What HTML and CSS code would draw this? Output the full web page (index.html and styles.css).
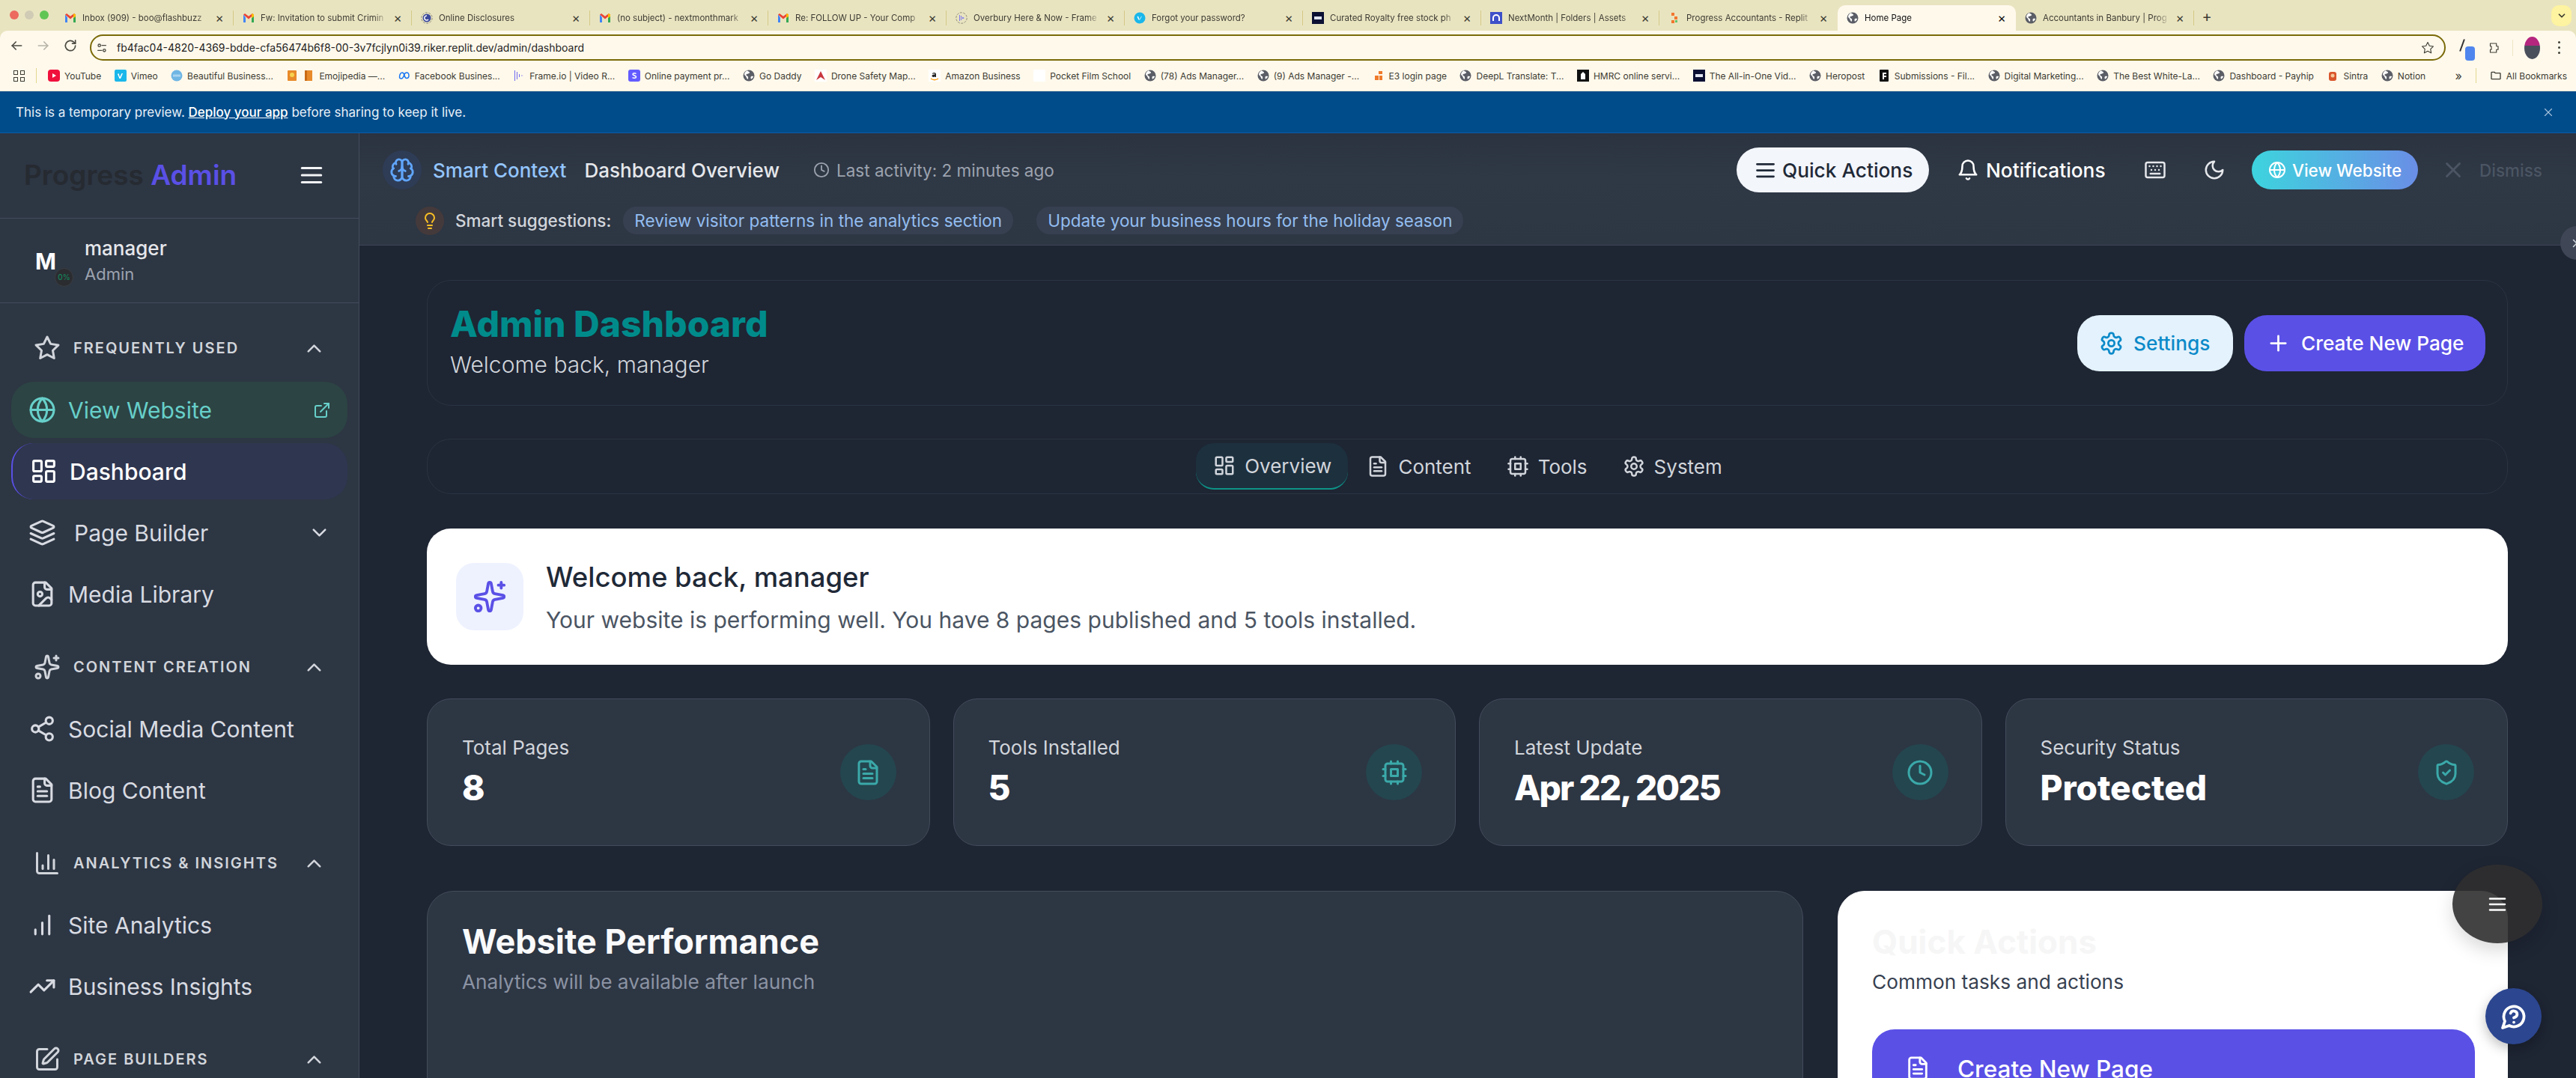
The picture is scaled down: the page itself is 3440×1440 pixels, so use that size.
FILE: index.html
```html
<!DOCTYPE html>
<html lang="en">
<head>
<meta charset="utf-8">
<title>Home Page</title>
<link rel="stylesheet" href="styles.css">
</head>
<body>
<svg class="sprite" xmlns="http://www.w3.org/2000/svg">
  <symbol id="i-star" viewBox="0 0 24 24"><polygon points="12 2 15.09 8.26 22 9.27 17 14.14 18.18 21.02 12 17.77 5.82 21.02 7 14.14 2 9.27 8.91 8.26 12 2"/></symbol>
  <symbol id="i-up" viewBox="0 0 24 24"><path d="m18 15-6-6-6 6"/></symbol>
  <symbol id="i-down" viewBox="0 0 24 24"><path d="m6 9 6 6 6-6"/></symbol>
  <symbol id="i-globe" viewBox="0 0 24 24"><circle cx="12" cy="12" r="10"/><path d="M12 2a14.5 14.5 0 0 0 0 20 14.5 14.5 0 0 0 0-20"/><path d="M2 12h20"/></symbol>
  <symbol id="i-ext" viewBox="0 0 24 24"><path d="M15 3h6v6"/><path d="M10 14 21 3"/><path d="M18 13v6a2 2 0 0 1-2 2H5a2 2 0 0 1-2-2V8a2 2 0 0 1 2-2h6"/></symbol>
  <symbol id="i-dash" viewBox="0 0 24 24"><rect x="3" y="3" width="7" height="9" rx="1"/><rect x="14" y="3" width="7" height="5" rx="1"/><rect x="14" y="12" width="7" height="9" rx="1"/><rect x="3" y="16" width="7" height="5" rx="1"/></symbol>
  <symbol id="i-layers" viewBox="0 0 24 24"><path d="m12.83 2.18a2 2 0 0 0-1.66 0L2.6 6.08a1 1 0 0 0 0 1.83l8.58 3.91a2 2 0 0 0 1.66 0l8.58-3.9a1 1 0 0 0 0-1.83Z"/><path d="m22 17.65-9.17 4.16a2 2 0 0 1-1.66 0L2 17.65"/><path d="m22 12.65-9.17 4.16a2 2 0 0 1-1.66 0L2 12.65"/></symbol>
  <symbol id="i-fimg" viewBox="0 0 24 24"><path d="M15 2H6a2 2 0 0 0-2 2v16a2 2 0 0 0 2 2h12a2 2 0 0 0 2-2V7Z"/><path d="M14 2v4a2 2 0 0 0 2 2h4"/><circle cx="10" cy="12" r="2"/><path d="m20 17-1.296-1.296a2.41 2.41 0 0 0-3.408 0L9 22"/></symbol>
  <symbol id="i-spark" viewBox="0 0 24 24"><path d="M11.017 2.814a1 1 0 0 1 1.966 0l1.051 5.558a2 2 0 0 0 1.594 1.594l5.558 1.051a1 1 0 0 1 0 1.966l-5.558 1.051a2 2 0 0 0-1.594 1.594l-1.051 5.558a1 1 0 0 1-1.966 0l-1.051-5.558a2 2 0 0 0-1.594-1.594l-5.558-1.051a1 1 0 0 1 0-1.966l5.558-1.051a2 2 0 0 0 1.594-1.594z"/><path d="M20 2v4"/><path d="M22 4h-4"/><circle cx="4" cy="20" r="2"/></symbol>
  <symbol id="i-share" viewBox="0 0 24 24"><circle cx="18" cy="5" r="3"/><circle cx="6" cy="12" r="3"/><circle cx="18" cy="19" r="3"/><path d="m8.59 13.51 6.83 3.98"/><path d="m15.41 6.51-6.82 3.98"/></symbol>
  <symbol id="i-file" viewBox="0 0 24 24"><path d="M15 2H6a2 2 0 0 0-2 2v16a2 2 0 0 0 2 2h12a2 2 0 0 0 2-2V7Z"/><path d="M14 2v4a2 2 0 0 0 2 2h4"/><path d="M10 9H8"/><path d="M16 13H8"/><path d="M16 17H8"/></symbol>
  <symbol id="i-chart" viewBox="0 0 24 24"><path d="M3 3v16a2 2 0 0 0 2 2h16"/><path d="M18 17V9"/><path d="M13 17V5"/><path d="M8 17v-3"/></symbol>
  <symbol id="i-bars" viewBox="0 0 24 24"><path d="M12 20V10"/><path d="M18 20V4"/><path d="M6 20v-4"/></symbol>
  <symbol id="i-trend" viewBox="0 0 24 24"><path d="M22 7 13.5 15.5 8.5 10.5 2 17"/><path d="M16 7h6v6"/></symbol>
  <symbol id="i-edit" viewBox="0 0 24 24"><path d="M12 3H5a2 2 0 0 0-2 2v14a2 2 0 0 0 2 2h14a2 2 0 0 0 2-2v-7"/><path d="M18.375 2.625a1 1 0 0 1 3 3l-9.013 9.014a2 2 0 0 1-.853.505l-2.873.84a.5.5 0 0 1-.62-.62l.84-2.873a2 2 0 0 1 .506-.852z"/></symbol>
  <symbol id="i-brain" viewBox="0 0 24 24"><path d="M12 5a3 3 0 1 0-5.997.125 4 4 0 0 0-2.526 5.77 4 4 0 0 0 .556 6.588A4 4 0 1 0 12 18Z"/><path d="M12 5a3 3 0 1 1 5.997.125 4 4 0 0 1 2.526 5.77 4 4 0 0 1-.556 6.588A4 4 0 1 1 12 18Z"/><path d="M15 13a4.5 4.5 0 0 1-3-4 4.5 4.5 0 0 1-3 4"/><path d="M17.599 6.5a3 3 0 0 0 .399-1.375"/><path d="M6.003 5.125A3 3 0 0 0 6.401 6.5"/><path d="M3.477 10.896a4 4 0 0 1 .585-.396"/><path d="M19.938 10.5a4 4 0 0 1 .585.396"/><path d="M6 18a4 4 0 0 1-1.967-.516"/><path d="M19.967 17.484A4 4 0 0 1 18 18"/></symbol>
  <symbol id="i-clock" viewBox="0 0 24 24"><circle cx="12" cy="12" r="10"/><path d="M12 6v6l4 2"/></symbol>
  <symbol id="i-bulb" viewBox="0 0 24 24"><path d="M15 14c.2-1 .7-1.7 1.5-2.5 1-.9 1.5-2.2 1.5-3.5A6 6 0 0 0 6 8c0 1 .2 2.2 1.5 3.5.7.7 1.3 1.5 1.5 2.5"/><path d="M9 18h6"/><path d="M10 22h4"/></symbol>
  <symbol id="i-menu" viewBox="0 0 24 24"><path d="M4 6h16"/><path d="M4 12h16"/><path d="M4 18h16"/></symbol>
  <symbol id="i-bell" viewBox="0 0 24 24"><path d="M6 8a6 6 0 0 1 12 0c0 7 3 9 3 9H3s3-2 3-9"/><path d="M10.3 21a1.94 1.94 0 0 0 3.4 0"/></symbol>
  <symbol id="i-keys" viewBox="0 0 24 24"><rect x="2" y="4" width="20" height="16" rx="2"/><path d="M6 8h.01"/><path d="M10 8h.01"/><path d="M14 8h.01"/><path d="M18 8h.01"/><path d="M8 12h.01"/><path d="M12 12h.01"/><path d="M16 12h.01"/><path d="M7 16h10"/></symbol>
  <symbol id="i-moon" viewBox="0 0 24 24"><path d="M12 3a6 6 0 0 0 9 9 9 9 0 1 1-9-9Z"/></symbol>
  <symbol id="i-x" viewBox="0 0 24 24"><path d="M18 6 6 18"/><path d="m6 6 12 12"/></symbol>
  <symbol id="i-gear" viewBox="0 0 24 24"><path d="M12.22 2h-.44a2 2 0 0 0-2 2v.18a2 2 0 0 1-1 1.73l-.43.25a2 2 0 0 1-2 0l-.15-.08a2 2 0 0 0-2.73.73l-.22.38a2 2 0 0 0 .73 2.73l.15.1a2 2 0 0 1 1 1.72v.51a2 2 0 0 1-1 1.74l-.15.09a2 2 0 0 0-.73 2.73l.22.38a2 2 0 0 0 2.73.73l.15-.08a2 2 0 0 1 2 0l.43.25a2 2 0 0 1 1 1.73V20a2 2 0 0 0 2 2h.44a2 2 0 0 0 2-2v-.18a2 2 0 0 1 1-1.73l.43-.25a2 2 0 0 1 2 0l.15.08a2 2 0 0 0 2.73-.73l.22-.39a2 2 0 0 0-.73-2.73l-.15-.08a2 2 0 0 1-1-1.74v-.5a2 2 0 0 1 1-1.74l.15-.09a2 2 0 0 0 .73-2.73l-.22-.38a2 2 0 0 0-2.73-.73l-.15.08a2 2 0 0 1-2 0l-.43-.25a2 2 0 0 1-1-1.73V4a2 2 0 0 0-2-2z"/><circle cx="12" cy="12" r="3"/></symbol>
  <symbol id="i-plus" viewBox="0 0 24 24"><path d="M5 12h14"/><path d="M12 5v14"/></symbol>
  <symbol id="i-cpu" viewBox="0 0 24 24"><rect x="4" y="4" width="16" height="16" rx="2"/><rect x="9" y="9" width="6" height="6"/><path d="M15 2v2"/><path d="M15 20v2"/><path d="M2 15h2"/><path d="M2 9h2"/><path d="M20 15h2"/><path d="M20 9h2"/><path d="M9 2v2"/><path d="M9 20v2"/></symbol>
  <symbol id="i-shield" viewBox="0 0 24 24"><path d="M20 13c0 5-3.5 7.5-7.66 8.95a1 1 0 0 1-.67-.01C7.5 20.5 4 18 4 13V6a1 1 0 0 1 1-1c2 0 4.5-1.2 6.24-2.72a1.17 1.17 0 0 1 1.52 0C14.51 3.81 17 5 19 5a1 1 0 0 1 1 1z"/><path d="m9 12 2 2 4-4"/></symbol>
  <symbol id="i-help" viewBox="0 0 24 24"><path d="M7.9 20A9 9 0 1 0 4 16.1L2 22Z"/><path d="M9.09 9a3 3 0 0 1 5.83 1c0 2-3 3-3 3"/><path d="M12 17h.01"/></symbol>
  <symbol id="i-back" viewBox="0 0 24 24"><path d="M20 12H5"/><path d="m11 6-6 6 6 6"/></symbol>
  <symbol id="i-fwd" viewBox="0 0 24 24"><path d="M4 12h15"/><path d="m13 6 6 6-6 6"/></symbol>
  <symbol id="i-reload" viewBox="0 0 24 24"><path d="M20 12a8 8 0 1 1-2.4-5.7L20 8.5"/><path d="M20 3.5v5h-5"/></symbol>
  <symbol id="i-tune" viewBox="0 0 24 24"><circle cx="7" cy="7" r="2.5"/><path d="M12 7h8"/><circle cx="17" cy="17" r="2.5"/><path d="M4 17h8"/></symbol>
  <symbol id="i-puzzle" viewBox="0 0 24 24"><path d="M6 4h11v5h3v6h-3v5H6v-5h2v-6H6z"/></symbol>
  <symbol id="i-folder" viewBox="0 0 24 24"><path d="M3 6a1 1 0 0 1 1-1h5l2 2h9a1 1 0 0 1 1 1v10a1 1 0 0 1-1 1H4a1 1 0 0 1-1-1z"/></symbol>
  <symbol id="f-gmail" viewBox="0 0 16 16"><path fill="#4285f4" d="M1 3.5V14h3V7.2z"/><path fill="#34a853" d="M12 7.2V14h3V3.5z"/><path fill="#ea4335" d="M1 3.5 3 2l5 3.8L13 2l2 1.500L8 9.500z"/><path fill="#fbbc04" d="M13 2l2 1.500V6l-3 2.200V3z"/></symbol>
  <symbol id="f-web" viewBox="0 0 16 16"><circle cx="8" cy="8" r="7.500" fill="#5b5e66"/><path fill="#fff" d="M6 1.500c1 1 2.500 1 3 2s-1 1.500-2 2-2 0-2.500 1 1 2 2 2.500.5 2 .5 3-1 1-1.500 0-1-2-1.500-3-2-1.500-2-3 2-4 4-5zM11 9c1-.5 2.500-.5 3 0s-1.500 3-2.500 3.500S10 10 11 9z"/></symbol>
  <symbol id="f-ring" viewBox="0 0 16 16"><circle cx="8" cy="8" r="7.200" fill="none" stroke="#8d8d7a" stroke-dasharray="3 1.500"/><circle cx="8" cy="8" r="5.500" fill="#3b4a9c"/><path d="M8 5a3 3 0 1 0 2 5" fill="none" stroke="#fff" stroke-width="1.500"/></symbol>
  <symbol id="f-frame" viewBox="0 0 16 16"><circle cx="8" cy="8" r="7.200" fill="none" stroke="#8d8d7a" stroke-dasharray="3 1.500"/><path fill="#7b78f0" d="M5 4h1v8H5zm2 1h1v6H7zm2 1.500 3 1.500-3 1.500z"/></symbol>
  <symbol id="f-vimeo" viewBox="0 0 16 16"><circle cx="8" cy="8" r="7.500" fill="#1ab7ea"/><path d="M4.500 6.500 6 5.500l1.500 4.500L10 6l1-.5-3 5H6.500z" fill="#fff"/></symbol>
  <symbol id="f-pond" viewBox="0 0 16 16"><rect width="16" height="16" fill="#0b1033"/><rect x="3" y="6" width="10" height="4" fill="#dfe3ef"/></symbol>
  <symbol id="f-nm" viewBox="0 0 16 16"><rect width="16" height="16" fill="#3f51c9"/><path d="M3 12V8a5 5 0 0 1 10 0v4h-2V8a3 3 0 0 0-6 0v4z" fill="#fff"/></symbol>
  <symbol id="f-prog" viewBox="0 0 16 16"><rect x="4" y="1" width="4" height="4" fill="#f2762e"/><rect x="8" y="6" width="4" height="4" fill="#f2762e"/><rect x="4" y="11" width="4" height="4" fill="#f2762e"/><rect x="9" y="11" width="3" height="3" fill="#62c46a"/></symbol>
  <symbol id="f-yt" viewBox="0 0 16 16"><rect width="16" height="16" rx="4" fill="#f0103c"/><path d="M6 5v6l5-3z" fill="#fff"/></symbol>
  <symbol id="f-vim2" viewBox="0 0 16 16"><rect width="16" height="16" rx="2" fill="#1ab7ea"/><path d="M4 6l1.500-1 1.500 5 2.500-5H11l-3 7H6.500z" fill="#fff"/></symbol>
  <symbol id="f-bb" viewBox="0 0 16 16"><circle cx="8" cy="8" r="7.500" fill="#6fb6e4"/><rect x="3" y="6.500" width="10" height="3" fill="#a8d4f0"/></symbol>
  <symbol id="f-emoji" viewBox="0 0 16 16"><rect x="2" y="1" width="12" height="14" rx="1" fill="#e88a2a"/><circle cx="8" cy="7" r="3" fill="#f7d24f"/></symbol>
  <symbol id="f-book" viewBox="0 0 16 16"><rect x="3" y="1" width="10" height="14" fill="#e88a2a"/><rect x="3" y="1" width="3" height="14" fill="#c96a15"/></symbol>
  <symbol id="f-meta" viewBox="0 0 16 16"><path d="M1.500 10c0-4 2-6 3.500-6s2.500 1.500 3 3.500 1.500 4 3 4 3-1 3-3.500-1.500-4-3-4-3 2-3.500 3.500S5.500 12 4 12s-2.500-1-2.500-2z" fill="none" stroke="#1877f2" stroke-width="1.500"/></symbol>
  <symbol id="f-fio" viewBox="0 0 16 16"><path fill="#6d6af0" d="M2 1h1v14H2zm3 2h1v10H5zm3 3h1v4H8zm3 1.500 3 .5-3 .5z"/></symbol>
  <symbol id="f-stripe" viewBox="0 0 16 16"><rect width="16" height="16" rx="3" fill="#635bff"/><path d="M10.500 5.500C9 4.500 6 4.500 6 6.300 6 8 10.500 7.500 10.500 9.800 10.500 11.500 7.500 11.800 5.500 10.700" fill="none" stroke="#fff" stroke-width="1.500"/></symbol>
  <symbol id="f-drone" viewBox="0 0 16 16"><rect width="16" height="16" fill="#fff"/><path d="M8 2 2 14l6-4 6 4z" fill="#c9373f"/></symbol>
  <symbol id="f-amz" viewBox="0 0 16 16"><rect width="16" height="16" fill="#fff"/><path d="M5 5c2-2 5-1 5 1v4H8.500V9C7 10.500 4.500 10 4.500 8.300 4.500 6.800 6.500 6.500 8.500 6.500 8.500 5 6.500 4.800 5.500 6z" fill="#222"/><path d="M3 12c3 2 7 2 10 0" fill="none" stroke="#f90" stroke-width="1.500"/></symbol>
  <symbol id="f-e3" viewBox="0 0 16 16"><rect x="8" y="2" width="5" height="4" fill="#ef7a2a"/><rect x="3" y="8" width="5" height="6" fill="#ef7a2a"/><rect x="9" y="8" width="4" height="6" fill="#ef7a2a"/></symbol>
  <symbol id="f-hmrc" viewBox="0 0 16 16"><rect width="16" height="16" fill="#111"/><path d="M8 3l3 3v7H5V6z" fill="#fff"/></symbol>
  <symbol id="f-sub" viewBox="0 0 16 16"><rect x="2" width="12" height="16" rx="1" fill="#111"/><path d="M6 4h5v2H8v2h3v2H8v3H6z" fill="#fff"/></symbol>
  <symbol id="f-sintra" viewBox="0 0 16 16"><rect x="3" y="3" width="10" height="12" rx="3" fill="#d9552b"/><circle cx="8" cy="8" r="2.500" fill="#f5c89a"/></symbol>
</svg>

<div class="chrome">
  <div class="tabstrip">
    <div class="lights"><i class="light red"></i><i class="light grey"></i><i class="light green"></i></div>
    <div class="tab"><svg class="fav"><use href="#f-gmail"/></svg><span class="tab-title">Inbox (909) - boo@flashbuzz</span><span class="tab-x">×</span></div>
    <div class="tab"><svg class="fav"><use href="#f-gmail"/></svg><span class="tab-title">Fw: Invitation to submit Crimin</span><span class="tab-x">×</span></div>
    <div class="tab"><svg class="fav"><use href="#f-ring"/></svg><span class="tab-title">Online Disclosures</span><span class="tab-x">×</span></div>
    <div class="tab"><svg class="fav"><use href="#f-gmail"/></svg><span class="tab-title">(no subject) - nextmonthmark</span><span class="tab-x">×</span></div>
    <div class="tab"><svg class="fav"><use href="#f-gmail"/></svg><span class="tab-title">Re: FOLLOW UP - Your Comp</span><span class="tab-x">×</span></div>
    <div class="tab"><svg class="fav"><use href="#f-frame"/></svg><span class="tab-title">Overbury Here &amp; Now - Frame</span><span class="tab-x">×</span></div>
    <div class="tab"><svg class="fav"><use href="#f-vimeo"/></svg><span class="tab-title">Forgot your password?</span><span class="tab-x">×</span></div>
    <div class="tab"><svg class="fav"><use href="#f-pond"/></svg><span class="tab-title">Curated Royalty free stock ph</span><span class="tab-x">×</span></div>
    <div class="tab"><svg class="fav"><use href="#f-nm"/></svg><span class="tab-title">NextMonth | Folders | Assets</span><span class="tab-x">×</span></div>
    <div class="tab tab-before-active"><svg class="fav"><use href="#f-prog"/></svg><span class="tab-title">Progress Accountants - Replit</span><span class="tab-x">×</span></div>
    <div class="tab tab-active"><svg class="fav"><use href="#f-web"/></svg><span class="tab-title">Home Page</span><span class="tab-x">×</span></div>
    <div class="tab"><svg class="fav"><use href="#f-web"/></svg><span class="tab-title">Accountants in Banbury | Prog</span><span class="tab-x">×</span></div>
    <span class="newtab">+</span>
    <span class="tabcaret"><svg class="ic caret-ic"><use href="#i-down"/></svg></span>
  </div>
  <div class="toolbar">
    <svg class="ic tb-ic"><use href="#i-back"/></svg>
    <svg class="ic tb-ic tb-dim"><use href="#i-fwd"/></svg>
    <svg class="ic tb-ic"><use href="#i-reload"/></svg>
    <div class="omnibox">
      <svg class="ic tune"><use href="#i-tune"/></svg>
      <span class="url">fb4fac04-4820-4369-bdde-cfa56474b6f8-00-3v7fcjlyn0i39.riker.replit.dev/admin/dashboard</span>
      <svg class="ic omni-star"><use href="#i-star"/></svg>
    </div>
    <span class="pen"><i class="pen-nib"></i><i class="pen-body"></i></span>
    <svg class="ic tb-ic puzzle"><use href="#i-puzzle"/></svg>
    <i class="tb-sep"></i>
    <span class="avatar"></span>
    <span class="dots"><i></i><i></i><i></i></span>
  </div>
  <div class="bookmarks">
    <span class="apps"><i></i><i></i><i></i><i></i></span>
    <i class="bm-sep"></i>
    <span class="bm"><svg class="fav"><use href="#f-yt"/></svg>YouTube</span>
    <span class="bm"><svg class="fav"><use href="#f-vim2"/></svg>Vimeo</span>
    <span class="bm"><svg class="fav"><use href="#f-bb"/></svg>Beautiful Business...</span>
    <span class="bm"><svg class="fav"><use href="#f-emoji"/></svg><svg class="fav"><use href="#f-book"/></svg>Emojipedia —...</span>
    <span class="bm"><svg class="fav"><use href="#f-meta"/></svg>Facebook Busines...</span>
    <span class="bm"><svg class="fav"><use href="#f-fio"/></svg>Frame.io | Video R...</span>
    <span class="bm"><svg class="fav"><use href="#f-stripe"/></svg>Online payment pr...</span>
    <span class="bm"><svg class="fav"><use href="#f-web"/></svg>Go Daddy</span>
    <span class="bm"><svg class="fav"><use href="#f-drone"/></svg>Drone Safety Map...</span>
    <span class="bm"><svg class="fav"><use href="#f-amz"/></svg>Amazon Business</span>
    <span class="bm"><span class="fav fav-blank"></span>Pocket Film School</span>
    <span class="bm"><svg class="fav"><use href="#f-web"/></svg>(78) Ads Manager...</span>
    <span class="bm"><svg class="fav"><use href="#f-web"/></svg>(9) Ads Manager -...</span>
    <span class="bm"><svg class="fav"><use href="#f-e3"/></svg>E3 login page</span>
    <span class="bm"><svg class="fav"><use href="#f-web"/></svg>DeepL Translate: T...</span>
    <span class="bm"><svg class="fav"><use href="#f-hmrc"/></svg>HMRC online servi...</span>
    <span class="bm"><svg class="fav"><use href="#f-pond"/></svg>The All-in-One Vid...</span>
    <span class="bm"><svg class="fav"><use href="#f-web"/></svg>Heropost</span>
    <span class="bm"><svg class="fav"><use href="#f-sub"/></svg>Submissions - Fil...</span>
    <span class="bm"><svg class="fav"><use href="#f-web"/></svg>Digital Marketing...</span>
    <span class="bm"><svg class="fav"><use href="#f-web"/></svg>The Best White-La...</span>
    <span class="bm"><svg class="fav"><use href="#f-web"/></svg>Dashboard - Payhip</span>
    <span class="bm"><svg class="fav"><use href="#f-sintra"/></svg>Sintra</span>
    <span class="bm"><svg class="fav"><use href="#f-web"/></svg>Notion</span>
    <span class="bm-end">
      <span class="bm-more">»</span>
      <i class="bm-sep bm-sep-end"></i>
      <span class="bm"><svg class="ic fav"><use href="#i-folder"/></svg>All Bookmarks</span>
    </span>
  </div>
</div>

<div class="banner">
  <span>This is a temporary preview. <a class="banner-link">Deploy your app</a> before sharing to keep it live.</span>
  <svg class="ic banner-x"><use href="#i-x"/></svg>
</div>

<div class="app">
  <aside class="sidebar">
    <div class="logo-row">
      <div class="logo"><span class="logo-dark">Progress</span> <span class="logo-accent">Admin</span></div>
      <svg class="ic logo-menu"><use href="#i-menu"/></svg>
    </div>
    <div class="user-row">
      <div class="user-m">M<span class="user-badge">0%</span></div>
      <div class="user-text"><div class="user-name">manager</div><div class="user-role">Admin</div></div>
    </div>
    <nav class="nav">
      <div class="nav-head"><svg class="ic head-ic"><use href="#i-star"/></svg><span>FREQUENTLY USED</span><svg class="ic head-chev"><use href="#i-up"/></svg></div>
      <div class="nav-list">
        <a class="nav-item nav-view"><svg class="ic nav-ic"><use href="#i-globe"/></svg><span>View Website</span><svg class="ic nav-ext"><use href="#i-ext"/></svg></a>
        <a class="nav-item nav-active"><svg class="ic nav-ic"><use href="#i-dash"/></svg><span>Dashboard</span></a>
        <a class="nav-item nav-wide"><svg class="ic nav-ic"><use href="#i-layers"/></svg><span>Page Builder</span><svg class="ic nav-chev"><use href="#i-down"/></svg></a>
        <a class="nav-item"><svg class="ic nav-ic"><use href="#i-fimg"/></svg><span>Media Library</span></a>
      </div>
      <div class="nav-head"><svg class="ic head-ic"><use href="#i-spark"/></svg><span>CONTENT CREATION</span><svg class="ic head-chev"><use href="#i-up"/></svg></div>
      <div class="nav-list">
        <a class="nav-item"><svg class="ic nav-ic"><use href="#i-share"/></svg><span>Social Media Content</span></a>
        <a class="nav-item"><svg class="ic nav-ic"><use href="#i-file"/></svg><span>Blog Content</span></a>
      </div>
      <div class="nav-head"><svg class="ic head-ic"><use href="#i-chart"/></svg><span>ANALYTICS &amp; INSIGHTS</span><svg class="ic head-chev"><use href="#i-up"/></svg></div>
      <div class="nav-list">
        <a class="nav-item"><svg class="ic nav-ic"><use href="#i-bars"/></svg><span>Site Analytics</span></a>
        <a class="nav-item"><svg class="ic nav-ic"><use href="#i-trend"/></svg><span>Business Insights</span></a>
      </div>
      <div class="nav-head"><svg class="ic head-ic"><use href="#i-edit"/></svg><span>PAGE BUILDERS</span><svg class="ic head-chev"><use href="#i-up"/></svg></div>
    </nav>
  </aside>

  <div class="main">
    <header class="topbar">
      <div class="top-row">
        <span class="brain"><svg class="ic brain-ic"><use href="#i-brain"/></svg></span>
        <span class="ctx-label">Smart Context</span>
        <span class="ctx-page">Dashboard Overview</span>
        <span class="ctx-time"><svg class="ic time-ic"><use href="#i-clock"/></svg>Last activity: 2 minutes ago</span>
        <div class="top-actions">
          <button class="btn-quick"><svg class="ic quick-ic"><use href="#i-menu"/></svg>Quick Actions</button>
          <button class="btn-notify"><svg class="ic act-ic"><use href="#i-bell"/></svg>Notifications</button>
          <svg class="ic act-ic act-keys"><use href="#i-keys"/></svg>
          <svg class="ic act-ic act-moon"><use href="#i-moon"/></svg>
          <button class="btn-view"><svg class="ic view-ic"><use href="#i-globe"/></svg>View Website</button>
          <span class="dismiss"><svg class="ic dismiss-ic"><use href="#i-x"/></svg>Dismiss</span>
        </div>
      </div>
      <div class="suggest-row">
        <span class="bulb"><svg class="ic bulb-ic"><use href="#i-bulb"/></svg></span>
        <span class="suggest-label">Smart suggestions:</span>
        <span class="chip">Review visitor patterns in the analytics section</span>
        <span class="chip">Update your business hours for the holiday season</span>
      </div>
    </header>

    <main class="content">
      <section class="page-head">
        <div class="page-text">
          <h1 class="page-title">Admin Dashboard</h1>
          <p class="page-sub">Welcome back, manager</p>
        </div>
        <div class="page-actions">
          <button class="btn-settings"><svg class="ic btn-ic"><use href="#i-gear"/></svg>Settings</button>
          <button class="btn-create"><svg class="ic btn-ic"><use href="#i-plus"/></svg>Create New Page</button>
        </div>
      </section>

      <section class="tabs">
        <a class="tabbtn tabbtn-on"><svg class="ic tabbtn-ic"><use href="#i-dash"/></svg>Overview</a>
        <a class="tabbtn"><svg class="ic tabbtn-ic"><use href="#i-file"/></svg>Content</a>
        <a class="tabbtn"><svg class="ic tabbtn-ic"><use href="#i-cpu"/></svg>Tools</a>
        <a class="tabbtn"><svg class="ic tabbtn-ic"><use href="#i-gear"/></svg>System</a>
      </section>

      <section class="welcome">
        <span class="welcome-box"><svg class="ic welcome-ic"><use href="#i-spark"/></svg></span>
        <div class="welcome-text">
          <h2 class="welcome-title">Welcome back, manager</h2>
          <p class="welcome-sub">Your website is performing well. You have 8 pages published and 5 tools installed.</p>
        </div>
      </section>

      <section class="stats">
        <div class="stat"><div><div class="stat-label">Total Pages</div><div class="stat-value">8</div></div><span class="stat-icon"><svg class="ic stat-ic"><use href="#i-file"/></svg></span></div>
        <div class="stat"><div><div class="stat-label">Tools Installed</div><div class="stat-value">5</div></div><span class="stat-icon"><svg class="ic stat-ic"><use href="#i-cpu"/></svg></span></div>
        <div class="stat"><div><div class="stat-label">Latest Update</div><div class="stat-value stat-date">Apr 22, 2025</div></div><span class="stat-icon"><svg class="ic stat-ic"><use href="#i-clock"/></svg></span></div>
        <div class="stat"><div><div class="stat-label">Security Status</div><div class="stat-value">Protected</div></div><span class="stat-icon"><svg class="ic stat-ic"><use href="#i-shield"/></svg></span></div>
      </section>

      <section class="panels">
        <div class="panel panel-dark">
          <h2 class="panel-title">Website Performance</h2>
          <p class="panel-sub">Analytics will be available after launch</p>
        </div>
        <div class="panel panel-light">
          <h2 class="panel-title panel-title-ghost">Quick Actions</h2>
          <p class="panel-sub panel-sub-dark">Common tasks and actions</p>
          <button class="qa-btn"><svg class="ic qa-ic"><use href="#i-file"/></svg>Create New Page</button>
        </div>
      </section>
    </main>
  </div>
</div>

<button class="collapse-handle"><svg class="ic handle-ic"><use href="#i-x"/></svg></button>
<button class="fab-menu"><svg class="ic fab-ic"><use href="#i-menu"/></svg></button>
<button class="fab-help"><svg class="ic help-ic"><use href="#i-help"/></svg></button>
</body>
</html>
```

FILE: styles.css
```css
* { box-sizing: border-box; }
html, body { margin: 0; height: 1440px; overflow: hidden; }
body { font-family: Inter, "Liberation Sans", sans-serif; background: #1e2533; color: #e5e7eb; display: flex; flex-direction: column; }
h1, h2, p { margin: 0; }
button { font-family: inherit; border: 0; cursor: pointer; }
.sprite { display: none; }
.ic { fill: none; stroke: currentColor; stroke-width: 2; stroke-linecap: round; stroke-linejoin: round; flex: none; }

/* Browser chrome */
.chrome { flex: none; height: 122px; background: #e9e4c0; font-size: 12px; color: #3d3c33; }
.tabstrip { height: 41px; display: flex; align-items: flex-end; }
.lights { width: 74px; height: 41px; display: flex; align-items: center; gap: 8px; padding-left: 13px; padding-bottom: 2px; }
.light { width: 12px; height: 12px; border-radius: 50%; }
.red { background: #ec6a5e; }
.grey { background: #cfcbb4; }
.green { background: #61c554; }
.tab { width: 238px; height: 34px; flex: none; display: flex; align-items: center; padding: 0 12px; position: relative; }
.tab::after { content: ""; position: absolute; right: 0; top: 7px; height: 20px; width: 1px; background: #d4c987; }
.tab-before-active::after, .tab-active::after { display: none; }
.tab-active { background: #fff9ec; border-radius: 10px 10px 0 0; color: #111; }
.fav { width: 16px; height: 16px; flex: none; }
.fav-blank { background: #fff; display: inline-block; }
.tab-title { margin-left: 8px; width: 176px; font-size: 11.500px; white-space: nowrap; overflow: hidden; -webkit-mask-image: linear-gradient(90deg, #000 86%, transparent 96%); mask-image: linear-gradient(90deg, #000 86%, transparent 96%); }
.tab-x { margin-left: auto; font-size: 17px; line-height: 1; width: 14px; text-align: center; }
.newtab { margin-left: 9px; width: 16px; height: 34px; font-size: 20px; line-height: 30px; text-align: center; }
.tabcaret { margin: 0 6px 6px auto; width: 27px; height: 28px; border-radius: 10px; background: #fdf3a0; display: flex; align-items: center; justify-content: center; }
.caret-ic { width: 14px; height: 14px; stroke-width: 3; }
.toolbar { height: 40px; background: #fff9ec; border-radius: 10px 10px 0 0; display: flex; align-items: center; padding: 0 12px; }
.tb-ic { width: 20px; height: 20px; margin-right: 16px; color: #4a4a42; }
.tb-dim { color: #b5b3a6; }
.omnibox { height: 35px; width: 3146px; margin-left: 0; margin-top: 5px; border: 2px solid #7a6a08; border-radius: 18px; display: flex; align-items: center; padding: 0 13px 0 6px; color: #222; }
.tune { width: 16px; height: 16px; margin-right: 12px; color: #4a4a42; }
.url { font-size: 14px; }
.omni-star { margin-left: auto; width: 18px; height: 18px; color: #3d3c33; stroke-width: 1.500; }
.pen { width: 20px; height: 26px; margin-left: 19px; position: relative; margin-top: 5px; margin-right: 16px; }
.pen-nib { position: absolute; left: 2px; top: 1px; width: 2px; height: 17px; background: #333; transform: rotate(20deg); }
.pen-body { position: absolute; left: 7px; top: 11px; width: 13px; height: 19px; border-radius: 4px; background: #4f86ee; }
.puzzle { width: 18px; height: 22px; margin: 5px 0 0 0; stroke-width: 1.500; color: #3d3c33; }
.tb-sep { width: 1px; height: 22px; margin: 5px 0 0 16px; background: #efe6c4; }
.avatar { width: 21px; height: 30px; margin: 5px 0 0 15px; border-radius: 50%; background: linear-gradient(#b5267f 40%, #4a4f5c 40%); }
.dots { display: flex; flex-direction: column; gap: 4px; margin: 5px 0 0 24px; }
.dots i { width: 3px; height: 3px; border-radius: 50%; background: #3d3c33; }
.bookmarks { height: 41px; background: #fff9ec; border-bottom: 1px solid #eee7d2; display: flex; align-items: center; padding-left: 18px; gap: 17.500px; }
.apps { display: grid; grid-template-columns: 6px 6px; gap: 3px; margin-right: -2.500px; flex: none; }
.apps i { width: 6px; height: 6px; border: 1px solid #3d3c33; display: block; }
.bm-sep { width: 1px; height: 20px; background: #e2d78f; flex: none; margin-right: -2.500px; }
.bm-sep-end { margin-right: 0; }
.bm { display: flex; align-items: center; gap: 6px; white-space: nowrap; flex: none; }
.bm-end { margin-left: auto; display: flex; align-items: center; gap: 18px; padding-right: 12px; }
.bm-more { font-size: 16px; }

.banner { flex: none; height: 56px; background: #004c8a; border-bottom: 1px solid #0c5ba6; display: flex; align-items: center; justify-content: space-between; padding: 0 28px 0 21px; font-size: 17px; color: #e8f0f8; }
.banner-link { text-decoration: underline; font-weight: 500; color: #fff; }
.banner-x { width: 18px; height: 18px; color: #a9c4de; stroke-width: 1.500; }

/* App frame */
.app { flex: 1; min-height: 0; display: flex; overflow: hidden; }
.sidebar { width: 480px; flex: none; background: #2d3643; border-right: 1px solid #434c5b; }
.logo-row { height: 114px; border-bottom: 1px solid #434c5b; display: flex; align-items: center; padding: 0 44px 2px 32px; }
.logo { font-size: 37px; font-weight: 600; white-space: nowrap; }
.logo-dark { color: #262a31; }
.logo-accent { color: #5a50e6; }
.logo-menu { margin-left: auto; width: 38px; height: 38px; color: #f3f4f6; }
.user-row { height: 113px; border-bottom: 1px solid #434c5b; display: flex; align-items: center; padding: 2px 0 0 47px; gap: 40px; }
.user-m { font-size: 30px; font-weight: 700; color: #fff; position: relative; width: 26px; }
.user-badge { position: absolute; left: 26px; top: 27px; width: 25px; height: 25px; border-radius: 50%; background: #2a2c30; border: 1px solid #3b3e42; color: #16825a; font-size: 10px; font-weight: 500; line-height: 23px; text-align: center; }
.user-name { font-size: 26px; font-weight: 500; color: #e5e7eb; line-height: 34px; }
.user-role { font-size: 22px; color: #9ca3af; line-height: 34px; }
.nav { padding-top: 40px; }
.nav-head { height: 40px; display: flex; align-items: center; padding-left: 45px; padding-right: 44px; font-size: 20px; font-weight: 600; letter-spacing: 2px; color: #d1d5db; white-space: nowrap; }
.head-ic { width: 36px; height: 36px; margin-right: 17px; }
.head-chev { margin-left: auto; width: 31px; height: 31px; }
.nav-list { margin: 25px 0 40px; display: flex; flex-direction: column; gap: 7px; }
.nav-item { margin: 0 15px; width: 449px; height: 75px; border-radius: 30px; display: flex; align-items: center; padding: 0 22px 0 23px; gap: 16px; font-size: 30px; color: #d8dbe2; white-space: nowrap; }
.nav-ic { width: 37px; height: 37px; }
.nav-ext { margin-left: auto; width: 24px; height: 24px; }
.nav-chev { margin-left: auto; width: 31px; height: 31px; }
.nav-view { background: #2c4444; color: #67cfc9; }
.nav-active { background: #2f3650; color: #fff; font-weight: 500; border-left: 2px solid #5a50e6; }
.nav-wide { gap: 24px; }

/* Main column */
.main { flex: 1; min-width: 0; display: flex; flex-direction: column; }
.topbar { flex: none; height: 150px; background: linear-gradient(#2b3340, #2f3845 40%, #2d3643); border-bottom: 1px solid #3e4756; padding: 19px 11px 0 31px; }
.top-row { height: 60px; display: flex; align-items: center; }
.brain { width: 52px; height: 52px; border-radius: 50%; background: #2e3c56; display: flex; align-items: center; justify-content: center; color: #60a5fa; }
.brain-ic { width: 34px; height: 34px; }
.ctx-label { margin-left: 15px; font-size: 26px; font-weight: 500; color: #93c5fd; }
.ctx-page { margin-left: 24px; font-size: 26px; font-weight: 500; color: #e5e7eb; }
.ctx-time { margin-left: 45px; display: flex; align-items: center; gap: 9px; font-size: 22.500px; color: #9ca3af; }
.time-ic { width: 22px; height: 22px; }
.top-actions { margin-left: auto; display: flex; align-items: center; }
.btn-quick { height: 60px; width: 257px; border-radius: 30px; background: #f3f6fb; color: #1f2937; font-size: 26.250px; font-weight: 500; display: flex; align-items: center; padding-left: 22px; gap: 6px; }
.quick-ic { width: 33px; height: 33px; }
.act-ic { width: 30px; height: 30px; }
.btn-notify { height: 60px; margin-left: 37px; width: 198px; background: none; color: #fff; font-size: 26.250px; font-weight: 500; display: flex; align-items: center; gap: 9px; padding: 0; }
.act-keys { margin-left: 52px; }
.act-moon { margin-left: 49px; }
.btn-view { margin-left: 35px; height: 52px; width: 222px; border-radius: 26px; background: linear-gradient(90deg, #3dd4de, #6a8ee6); color: #fff; font-size: 22.500px; font-weight: 500; display: flex; align-items: center; padding-left: 22px; gap: 8px; }
.view-ic { width: 24px; height: 24px; }
.dismiss { margin-left: 30px; display: flex; align-items: center; gap: 18px; font-size: 22.500px; font-weight: 500; color: #4b5563; width: 170px; }
.dismiss-ic { width: 34px; height: 34px; }
.suggest-row { margin-top: 19px; height: 37px; display: flex; align-items: center; padding-left: 44px; }
.bulb { width: 38px; height: 38px; border-radius: 50%; background: #453a3b; display: flex; align-items: center; justify-content: center; color: #fbbf24; }
.bulb-ic { width: 24px; height: 24px; }
.suggest-label { margin-left: 15px; font-size: 22.500px; font-weight: 500; color: #d1d5db; }
.chip { margin-left: 16px; height: 37px; padding: 0 15px; border-radius: 18px; background: #374050; color: #93bdf0; font-size: 22.500px; line-height: 37px; white-space: nowrap; }
.chip + .chip { margin-left: 31px; }

.content { flex: 1; min-height: 0; padding: 46px 91px 0 90px; overflow: hidden; }
.page-head { height: 168px; border: 1px solid #2a3442; border-radius: 32px; display: flex; align-items: center; justify-content: space-between; padding: 0 29px 0 30px; }
.page-text { padding-bottom: 6px; }
.page-title { font-size: 48px; line-height: 62px; font-weight: 800; color: #008b8b; }
.page-sub { margin-top: 2px; font-size: 30px; line-height: 42px; color: #d1d5db; font-weight: 300; }
.page-actions { display: flex; gap: 15px; }
.btn-settings, .btn-create { height: 75px; border-radius: 30px; font-size: 26.250px; font-weight: 500; display: flex; align-items: center; padding-left: 29px; }
.btn-settings { width: 208px; background: #e3f2fc; color: #0b8ac9; gap: 13px; }
.btn-create { width: 322px; background: #5a50e6; color: #fff; gap: 14px; }
.btn-ic { width: 33px; height: 33px; }
.tabs { margin-top: 44px; height: 74px; border: 1px solid #2a3442; border-radius: 32px; display: flex; align-items: center; justify-content: center; gap: 2px; }
.tabbtn { height: 62px; display: flex; align-items: center; gap: 12px; padding: 0 22px 0 23px; font-size: 26px; color: #d1d5db; border-radius: 24px; }
.tabbtn-on { background: #1d303e; border-bottom: 2px solid #0d9488; }
.tabbtn-ic { width: 30px; height: 30px; }
.welcome { margin-top: 46px; height: 182px; background: #fff; border-radius: 32px; display: flex; align-items: center; padding-left: 39px; gap: 30px; }
.welcome-box { width: 90px; height: 90px; border-radius: 24px; background: #eef2ff; display: flex; align-items: center; justify-content: center; color: #5a50e6; flex: none; }
.welcome-ic { width: 46px; height: 46px; }
.welcome-text { padding-top: 3px; }
.welcome-title { font-size: 36.500px; line-height: 46px; font-weight: 500; color: #1f2937; }
.welcome-sub { margin-top: 13px; font-size: 30px; line-height: 42px; color: #4b5563; }
.stats { margin-top: 45px; display: grid; grid-template-columns: repeat(4, 1fr); gap: 31px; }
.stat { height: 197px; background: #2d3643; border: 1px solid #434c5b; border-radius: 32px; display: flex; align-items: center; justify-content: space-between; padding: 0 44px 0 46px; }
.stat-label { font-size: 26px; line-height: 36px; color: #d1d5db; }
.stat-value { margin-top: 4px; font-size: 46px; line-height: 62px; font-weight: 800; color: #fff; white-space: nowrap; }
.stat-date { letter-spacing: -1.900px; }
.stat-icon { width: 75px; height: 75px; border-radius: 50%; background: #24464f; display: flex; align-items: center; justify-content: center; color: #3ba9a9; }
.stat-ic { width: 36px; height: 36px; }
.panels { margin-top: 60px; display: grid; grid-template-columns: 1838px 895px; gap: 46px; }
.panel { height: 420px; border-radius: 36px; padding: 40px 46px; border: 1px solid #434c5b; }
.panel-dark { background: #2d3643; }
.panel-light { background: #fff; border-color: #fff; padding: 40px 45px; }
.panel-title { font-size: 45px; line-height: 54px; font-weight: 700; color: #f9fafb; }
.panel-title-ghost { font-size: 44px; color: #f6f6f6; }
.panel-sub { margin-top: 7px; font-size: 26.250px; line-height: 40px; color: #8b93a3; }
.panel-sub-dark { color: #374151; }
.qa-btn { margin-top: 43px; width: 805px; height: 104px; border-radius: 30px; background: #5a50e6; color: #fff; font-size: 31.500px; font-weight: 500; display: flex; align-items: center; gap: 36px; padding-left: 44px; }
.qa-ic { width: 34px; height: 34px; }

/* Floating controls */
.collapse-handle { position: absolute; left: 3419px; top: 302px; width: 44px; height: 45px; border-radius: 50%; background: #3f4756; color: #d1d5db; padding: 0 0 0 13px; text-align: left; }
.handle-ic { width: 18px; height: 18px; display: block; }
.fab-menu { position: absolute; left: 3275px; top: 1155px; width: 120px; height: 105px; border-radius: 50%; background: rgba(47,47,47,.9); color: #fff; display: flex; align-items: center; justify-content: center; box-shadow: 0 10px 24px rgba(0,0,0,.15); padding: 0; }
.fab-ic { width: 30px; height: 30px; }
.fab-help { position: absolute; left: 3319px; top: 1320px; width: 75px; height: 75px; border-radius: 50%; background: #2c4690; color: #fff; display: flex; align-items: center; justify-content: center; box-shadow: 0 6px 16px rgba(0,0,0,.25); padding: 0; }
.help-ic { width: 36px; height: 36px; stroke-width: 2.500; }
```
